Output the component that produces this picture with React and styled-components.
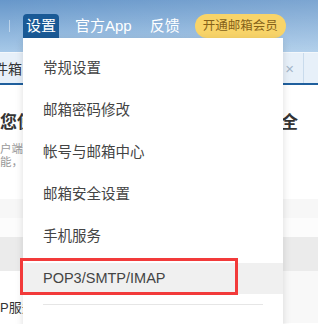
import React from "react";
import styled, { createGlobalStyle } from "styled-components";

const Global = createGlobalStyle`
  html, body { margin: 0; padding: 0; background: #fff; }
  body { font-family: "Liberation Sans", "Noto Sans CJK SC", sans-serif; }
  * { box-sizing: border-box; }
`;

const Page = styled.div`
  width: 318px;
  height: 324px;
  overflow: hidden;
  position: relative;
  background: #fff;
`;

const Header = styled.div`
  height: 52px;
  display: flex;
  align-items: flex-start;
  padding: 14px 0 0 9px;
  background:
    linear-gradient(90deg, rgba(255,255,255,0) 0%, rgba(255,255,255,0.14) 100%),
    linear-gradient(180deg, #6797ca 0%, #a7c9e8 100%);
`;

const Sep = styled.div`
  width: 1px;
  height: 12px;
  margin-top: 6px;
  margin-right: 13px;
  background: rgba(255,255,255,0.45);
`;

const Drop = styled.div`
  position: relative;
`;

const NavButton = styled.div`
  height: 24px;
  line-height: 24px;
  padding: 0 3px;
  font-size: 15px;
  color: #fff;
  background: ${p => (p.$active ? "#1a5a96" : "transparent")};
  border-radius: 4px 4px 0 0;
`;

const NavLink = styled.div`
  height: 24px;
  line-height: 24px;
  font-size: 15px;
  color: #fff;
  margin-left: ${p => p.$ml}px;
`;

const Pill = styled.div`
  height: 24px;
  line-height: 24px;
  margin-left: 15px;
  padding: 0 8px;
  border-radius: 12px;
  font-size: 12.5px;
  background: #f8d469;
  color: #86621a;
`;

const Menu = styled.div`
  position: absolute;
  top: 24px;
  left: 0;
  width: 260px;
  height: 300px;
  background: #fff;
  box-shadow: 0 2px 8px rgba(0,0,0,0.13);
  padding-top: 15px;
  display: flex;
  flex-direction: column;
  gap: 11px;
  z-index: 10;
`;

const Item = styled.div`
  position: relative;
  height: 31px;
  line-height: 31px;
  padding-left: 20px;
  font-size: 14.5px;
  color: #444;
  background: ${p => (p.$hover ? "#f0f0f0" : "transparent")};
`;

const Mark = styled.div`
  position: absolute;
  left: -3px;
  top: -5px;
  width: 218px;
  height: 37px;
  border: 3px solid #f23a3a;
`;

const Divider = styled.div`
  height: 1px;
  margin: -1px 20px 0;
  background: #e6e6e6;
`;

const TabBar = styled.div`
  height: 33px;
  display: flex;
  align-items: stretch;
  background: #e7f0f9;
  border-top: 1px solid #f4f8fc;
  border-bottom: 2px solid #1f5f9d;
`;

const Tab = styled.div`
  flex: 1;
  display: flex;
  align-items: center;
  justify-content: space-between;
  padding-right: 9px;
  font-size: 14px;
  color: #333;
  margin-left: -6px;
  border-right: 1px solid #c9dbec;
`;

const Close = styled.span`
  color: #a3b6c9;
  font-size: 15px;
`;

const TabRest = styled.div`
  width: 14px;
`;

const HeadRow = styled.div`
  display: flex;
  justify-content: space-between;
  padding: 29px 20px 0 0;
  font-size: 17px;
  font-weight: bold;
  color: #333;
  line-height: 18px;
`;

const Small = styled.div`
  margin-top: 11px;
  font-size: 11.5px;
  line-height: 13px;
  color: #9a9a9a;
`;

const Band = styled.div`
  height: ${p => p.$h}px;
  margin-top: ${p => p.$mt || 0}px;
  background: ${p => p.$bg};
`;

const Bottom = styled.div`
  height: 52px;
  padding-top: 26px;
  font-size: 13px;
  color: #333;
  background: linear-gradient(90deg, #fff 50%, #f8f8f8 50%);
`;

export default function App() {
  const items = ["常规设置", "邮箱密码修改", "帐号与邮箱中心", "邮箱安全设置", "手机服务"];
  return (
    <Page>
      <Global />
      <Header>
        <Sep />
        <Drop>
          <NavButton $active>设置</NavButton>
          <Menu>
            {items.map(t => (
              <Item key={t}>{t}</Item>
            ))}
            <Item $hover>
              POP3/SMTP/IMAP
              <Mark />
            </Item>
            <Divider />
          </Menu>
        </Drop>
        <NavLink $ml={16}>官方App</NavLink>
        <NavLink $ml={18}>反馈</NavLink>
        <Pill>开通邮箱会员</Pill>
      </Header>
      <TabBar>
        <Tab>
          件箱
          <Close>×</Close>
        </Tab>
        <TabRest />
      </TabBar>
      <HeadRow>
        <span>您使</span>
        <span>全</span>
      </HeadRow>
      <Small>
        户端
        <br />
        能，
      </Small>
      <Band $h={19} $mt={30} $bg="#f7f7f7" />
      <Band $h={19} $bg="#fcfcfc" />
      <Band $h={34} $bg="#ebebeb" />
      <Bottom>P服务</Bottom>
    </Page>
  );
}
